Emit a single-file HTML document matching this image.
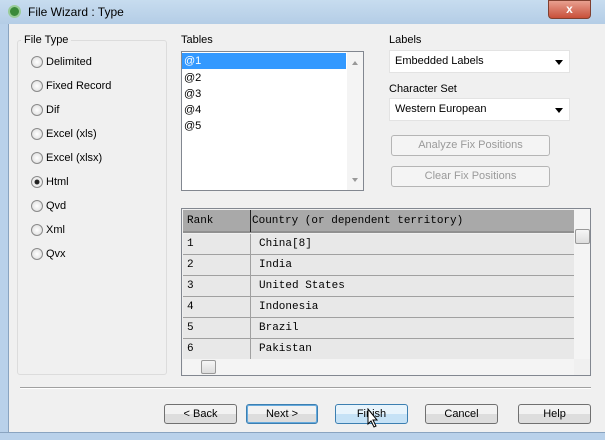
<!DOCTYPE html><html><head><style>
*{box-sizing:border-box;margin:0;padding:0}
body{width:605px;height:440px;overflow:hidden;font-family:"Liberation Sans",sans-serif;font-size:11px;color:#000;background:#f0f0f0;position:relative}
.a{position:absolute}
.title{left:0;top:0;width:605px;height:24px;background:linear-gradient(180deg,#c7dcef,#b4cde6);}
.frame{left:0;top:24px;width:9px;height:416px;background:#b9d1ea;border-right:1px solid #8aa4c0}
.bot{left:0;top:432px;width:605px;height:8px;background:#b9d1ea;border-top:1px solid #8aa4c0}
.r{position:absolute;width:12px;height:12px;border-radius:50%;border:1px solid #8a8a8a;background:radial-gradient(#fff,#d8d8d8)}
.btn{position:absolute;height:20px;border:1px solid #707070;border-radius:3px;background:linear-gradient(#f2f2f2 50%,#dddddd 50%);text-align:center;line-height:18px}
.dis{color:#9a9a9a;border-color:#b5b5b5;background:#f4f4f4}
.cmb{position:absolute;width:181px;height:23px;background:#fff;border:1px solid #e3e3e3;padding-left:5px;line-height:21px}
.cmb:after{content:"";position:absolute;right:6px;top:9px;border:4px solid transparent;border-top:5px solid #000}
.mono{font-family:"Liberation Mono",monospace;font-size:11px}
.row{position:absolute;left:1px;width:391px;height:21px;border-bottom:1px solid #a0a0a0;background:#e8e8e8}
.row span{position:absolute;top:4px}
</style></head><body>
<div class="a title"></div>
<div class="a" style="left:8px;top:5px;width:13px;height:13px;border-radius:50%;background:#3a8a3a;border:2px solid #9c9"></div>
<div class="a" style="left:28px;top:5px;font-size:12px">File Wizard : Type</div>
<div class="a" style="left:548px;top:0;width:43px;height:19px;border-radius:0 0 4px 4px;background:linear-gradient(#e8a090,#c8503a);border:1px solid #804030;color:#fff;text-align:center;font-weight:bold;font-size:12px;line-height:17px">x</div>
<div class="a frame"></div>
<div class="a bot"></div>

<div class="a" style="left:17px;top:40px;width:150px;height:335px;border:1px solid #dcdcdc;border-radius:3px"></div>
<div class="a" style="left:21px;top:34px;background:#f0f0f0;padding:0 3px">File Type</div>
<div class="r" style="left:31px;top:56px"></div><div class="a" style="left:46px;top:56px">Delimited</div>
<div class="r" style="left:31px;top:80px"></div><div class="a" style="left:46px;top:80px">Fixed Record</div>
<div class="r" style="left:31px;top:104px"></div><div class="a" style="left:46px;top:104px">Dif</div>
<div class="r" style="left:31px;top:128px"></div><div class="a" style="left:46px;top:128px">Excel (xls)</div>
<div class="r" style="left:31px;top:152px"></div><div class="a" style="left:46px;top:152px">Excel (xlsx)</div>
<div class="r" style="left:31px;top:176px;background:radial-gradient(#222 30%,#eee 40%)"></div><div class="a" style="left:46px;top:176px">Html</div>
<div class="r" style="left:31px;top:200px"></div><div class="a" style="left:46px;top:200px">Qvd</div>
<div class="r" style="left:31px;top:224px"></div><div class="a" style="left:46px;top:224px">Xml</div>
<div class="r" style="left:31px;top:248px"></div><div class="a" style="left:46px;top:248px">Qvx</div>

<div class="a" style="left:181px;top:34px">Tables</div>
<div class="a" style="left:181px;top:51px;width:183px;height:140px;background:#fff;border:1px solid #828790"></div>
<div class="a" style="left:182px;top:53px;width:164px;height:16px;background:#3399ff;color:#fff;padding-left:2px;line-height:16px">@1</div>
<div class="a" style="left:184px;top:70px;line-height:16px">@2<br>@3<br>@4<br>@5</div>
<div class="a" style="left:347px;top:52px;width:16px;height:138px;background:#f4f4f4"></div>
<div class="a" style="left:352px;top:58px;border:3px solid transparent;border-bottom:4px solid #999"></div>
<div class="a" style="left:352px;top:178px;border:3px solid transparent;border-top:4px solid #999"></div>

<div class="a" style="left:389px;top:34px">Labels</div>
<div class="cmb" style="left:389px;top:50px">Embedded Labels</div>
<div class="a" style="left:389px;top:83px">Character Set</div>
<div class="cmb" style="left:389px;top:98px">Western European</div>
<div class="btn dis" style="left:391px;top:135px;width:159px;height:21px">Analyze Fix Positions</div>
<div class="btn dis" style="left:391px;top:166px;width:159px;height:21px">Clear Fix Positions</div>

<div class="a" style="left:181px;top:208px;width:410px;height:168px;border:1px solid #828790;background:#f0f0f0;overflow:hidden">
<div class="a mono" style="left:1px;top:1px;width:391px;height:23px;background:#a9a9a9;border-bottom:2px solid #909090"><span class="a" style="left:4px;top:5px">Rank</span><span class="a" style="left:69px;top:5px">Country (or dependent territory)</span><div class="a" style="left:67px;top:0;width:1px;height:22px;background:#222"></div></div>
<div class="row mono" style="top:25px"><span style="left:4px">1</span><span style="left:76px">China[8]</span></div>
<div class="row mono" style="top:46px"><span style="left:4px">2</span><span style="left:76px">India</span></div>
<div class="row mono" style="top:67px"><span style="left:4px">3</span><span style="left:76px">United States</span></div>
<div class="row mono" style="top:88px"><span style="left:4px">4</span><span style="left:76px">Indonesia</span></div>
<div class="row mono" style="top:109px"><span style="left:4px">5</span><span style="left:76px">Brazil</span></div>
<div class="row mono" style="top:130px"><span style="left:4px">6</span><span style="left:76px">Pakistan</span></div>
<div class="a" style="left:68px;top:25px;width:1px;height:125px;background:#a0a0a0"></div>
<div class="a" style="left:392px;top:0;width:17px;height:150px;background:#f4f4f4"></div>
<div class="a" style="left:393px;top:20px;width:15px;height:15px;border:1px solid #999;border-radius:2px;background:linear-gradient(#f6f6f6,#ddd)"></div>
<div class="a" style="left:1px;top:150px;width:391px;height:17px;background:#f4f4f4"></div>
<div class="a" style="left:19px;top:151px;width:15px;height:14px;border:1px solid #999;border-radius:2px;background:linear-gradient(#f6f6f6,#ddd)"></div>
</div>

<div class="a" style="left:20px;top:387px;width:571px;height:2px;border-top:1px solid #a0a0a0;border-bottom:1px solid #fff"></div>
<div class="btn" style="left:164px;top:404px;width:73px">&lt; Back</div>
<div class="btn" style="left:246px;top:404px;width:72px;border-color:#3c7fb1;box-shadow:inset 0 0 0 1px #6ad">Next &gt;</div>
<div class="btn" style="left:335px;top:404px;width:73px;border-color:#3c7fb1;background:linear-gradient(#e8f4fc 50%,#c6e2f6 50%)">Finish</div>
<div class="btn" style="left:425px;top:404px;width:73px">Cancel</div>
<div class="btn" style="left:518px;top:404px;width:73px">Help</div>
<svg class="a" style="left:367px;top:408px" width="12" height="20"><path d="M1 1 L1 16 L4 13 L7 19 L9 18 L6 12 L10 12 Z" fill="#fff" stroke="#000"/></svg>
</body></html>
